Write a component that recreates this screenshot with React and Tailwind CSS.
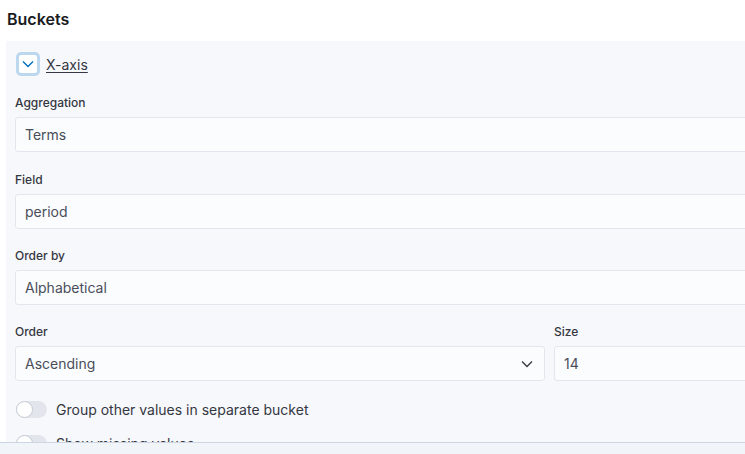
import React from 'react';

const font = { fontFamily: 'Inter, "Noto Sans", sans-serif' };

const Chevron = ({ className, width = 1.3 }) => (
    <svg viewBox="0 0 16 16" className={className} fill="none" stroke="currentColor" strokeWidth={width}>
        <polyline points="3,5.5 8,10.5 13,5.5" />
    </svg>
);

const Label = ({ children }) => (
    <div className="h-4 mb-[6px] text-[12px] leading-4 font-medium text-[#343741]">{children}</div>
);

const Field = ({ label, value, className = '' }) => (
    <div className={className}>
        <Label>{label}</Label>
        <div className="h-[35px] flex items-center px-[9px] bg-[#fbfcfd] border border-[#e3e6ee] rounded-[3px] text-[14px] text-[#4a4e5a]">
            {value}
        </div>
    </div>
);

const Toggle = ({ label }) => (
    <div className="flex items-center h-[18px] gap-[9px]">
        <div className="relative w-[31px] h-[17px] rounded-full bg-[#e2e5ec]">
            <div className="absolute left-0 top-0 w-[17px] h-[17px] rounded-full bg-white border border-[#c5cad4]" />
        </div>
        <span className="text-[14px] text-[#343741]">{label}</span>
    </div>
);

export default function App() {
    return (
        <div className="relative w-[745px] h-[454px] overflow-hidden bg-white" style={font}>
            <div className="pt-[8px] pl-[7px] h-[30px] text-[16px] leading-[22px] font-semibold text-[#1a1c21]">Buckets</div>
            <div className="mt-[11px] ml-[6px] w-[780px] bg-[#f7f8fc] pt-[11px] px-[9px] pb-8">
                <div className="flex items-center gap-[6px] ml-px">
                    <div className="w-[24px] h-[24px] flex items-center justify-center bg-white border-[3px] border-[#bcd8ef] rounded-[5px]">
                        <Chevron className="w-[16px] h-[16px] text-[#0071c2]" width={1.4} />
                    </div>
                    <span className="text-[14px] text-[#343741] underline underline-offset-2">X-axis</span>
                </div>
                <div className="mt-[19px] flex flex-col gap-[19px]">
                    <Field label="Aggregation" value="Terms" />
                    <Field label="Field" value="period" className="mt-px" />
                    <Field label="Order by" value="Alphabetical" />
                    <div className="flex gap-[9px]">
                        <div className="w-[530px]">
                            <Label>Order</Label>
                            <div className="h-[35px] flex items-center justify-between px-[9px] bg-[#fbfcfd] border border-[#e3e6ee] rounded-[3px] text-[14px] text-[#4a4e5a]">
                                <span>Ascending</span>
                                <Chevron className="w-[16px] h-[16px] text-[#343741]" />
                            </div>
                        </div>
                        <Field label="Size" value="14" className="flex-1" />
                    </div>
                </div>
                <div className="mt-[19px] ml-px flex flex-col gap-[16px]">
                    <Toggle label="Group other values in separate bucket" />
                    <Toggle label="Show missing values" />
                </div>
            </div>
            <div className="absolute left-0 right-0 bottom-0 h-[12px] bg-[#f1f4f9] border-t border-[#cbd6e2]" />
        </div>
    );
}
